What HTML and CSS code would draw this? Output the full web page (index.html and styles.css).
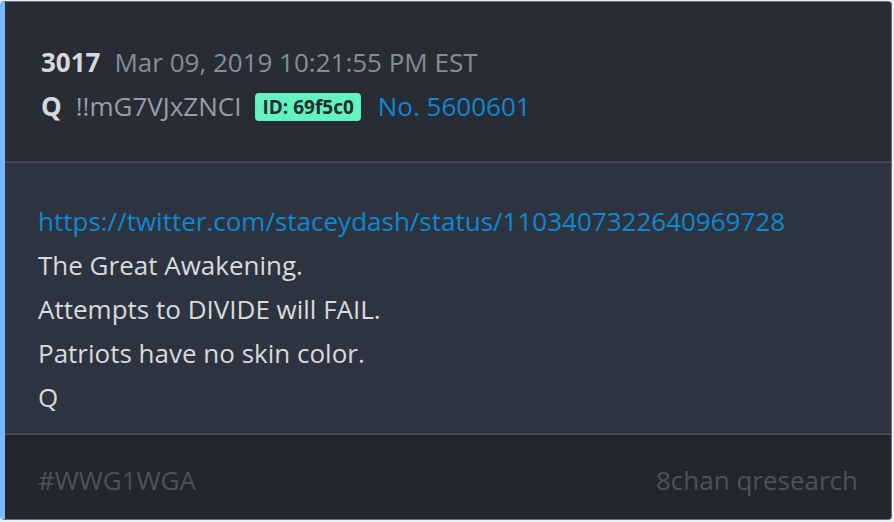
FILE: index.html
```html
<!DOCTYPE html>
<html lang="en">
<head>
    <meta charset="UTF-8">
    <meta name="viewport" content="width=device-width, initial-scale=1.0">
    <title>Post 3017</title>
    <link rel="stylesheet" href="styles.css">
</head>
<body>

<div class="post">
    <div class="postHeader">
        <div class="headLine">
            <span class="postNum">3017</span>
            <span class="postDate">Mar 09, 2019 10:21:55 PM EST</span>
        </div>
        <div class="headLine">
            <span class="author">Q</span>
            <span class="trip">!!mG7VJxZNCI</span>
            <span class="idBadge">ID: 69f5c0</span>
            <a class="postLink" href="#">No. 5600601</a>
        </div>
    </div>
    <div class="postBody">
        <a class="bodyLink" href="#">https://twitter.com/staceydash/status/1103407322640969728</a>
        <div class="bodyLine">The Great Awakening.</div>
        <div class="bodyLine">Attempts to DIVIDE will FAIL.</div>
        <div class="bodyLine">Patriots have no skin color.</div>
        <div class="bodyLine">Q</div>
    </div>
    <div class="postFooter">
        <span>#WWG1WGA</span>
        <span>8chan qresearch</span>
    </div>
</div>

</body>
</html>
```

FILE: styles.css
```css
* {
    box-sizing: border-box;
}
body {
    margin: 0;
    height: 100vh;
    background: #eef0f3;
    font-family: "Open Sans", "Noto Sans", sans-serif;
    font-size: 26px;
    padding: 1px 2px 2px 0;
}
.post {
    height: 100%;
    display: flex;
    flex-direction: column;
    border: 1px solid #6b707b;
    border-left: 5px solid #79b8ff;
    border-radius: 4px;
    overflow: hidden;
    background: #282c34;
}
.postHeader {
    padding: 38px 33px 33px;
    background: #282c34;
    border-bottom: 2px solid #444953;
}
.headLine {
    display: flex;
    align-items: center;
    height: 44px;
}
.postNum {
    font-weight: bold;
    color: #d6d8dc;
    margin-right: 14px;
    margin-left: 3px;
}
.postDate {
    color: #868c98;
}
.author {
    font-weight: bold;
    color: #d6d8dc;
    margin-left: 3px;
    margin-right: 14px;
}
.trip {
    color: #989da7;
    margin-right: 14px;
}
.idBadge {
    background: #62f3bf;
    color: #272b31;
    font-weight: bold;
    font-size: 19px;
    border-radius: 4px;
    padding: 0 7px;
    height: 28px;
    line-height: 28px;
    margin-top: 1px;
    margin-right: 17px;
}
.postLink {
    color: #0d88d2;
    text-decoration: none;
}
.postBody {
    flex: 1;
    background: #2e343f;
    padding: 36px 33px 12px;
    border-bottom: 2px solid #444953;
    color: #d8dade;
}
.bodyLink {
    display: block;
    color: #0d88d2;
    text-decoration: none;
    line-height: 44px;
}
.bodyLine {
    line-height: 44px;
}
.postFooter {
    height: 84px;
    background: #23262d;
    display: flex;
    justify-content: space-between;
    align-items: center;
    padding: 6px 33px 0;
    color: #4d525c;
}
```
